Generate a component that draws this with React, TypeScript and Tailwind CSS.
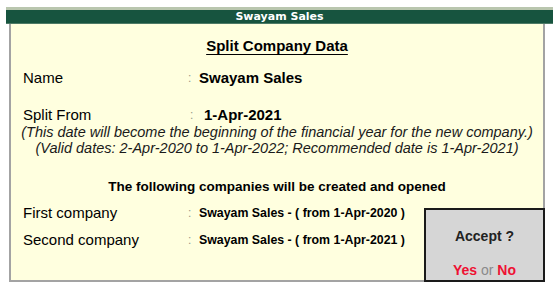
export default function App() {
  const font = "font-['Liberation_Sans',Arial,sans-serif]";
  return (
    <div className={`relative w-[553px] h-[288px] bg-white overflow-hidden ${font}`}>
      {/* faint frame line of the window behind */}
      <div className="ml-[6px] mt-[7px] h-[3px] bg-[#b9c6ae]" />
      {/* title bar */}
      <div className="ml-[6px] h-[14px] bg-[#17543f] border-b border-[#4d7a66] flex items-center justify-center">
        <span className="font-['DejaVu_Sans',Verdana,sans-serif] text-[11px] font-bold text-white leading-none">
          Swayam Sales
        </span>
      </div>
      {/* panel */}
      <div className="relative ml-[9px] w-[536px] h-[258px] bg-[#ffffdf] border-x-2 border-b-2 border-[#a3a3a3] text-black">
        <div className="pt-[10px] text-center">
          <span className="text-[15px] font-bold underline underline-offset-[3px] leading-none">Split Company Data</span>
        </div>

        <div className="mt-[11px] flex items-center pl-[12px] h-[18px]">
          <span className="w-[165px] text-[15px]">Name</span>
          <span className="w-[11px] text-[12px] text-[#9a9a8a]">:</span>
          <span className="text-[15px] font-bold">Swayam Sales</span>
        </div>

        <div className="mt-[19px] flex items-center pl-[12px] h-[18px]">
          <span className="w-[167px] text-[15px]">Split From</span>
          <span className="w-[14px] text-[12px] text-[#9a9a8a]">:</span>
          <span className="text-[15px] font-bold">1-Apr-2021</span>
        </div>
        <div className="text-center italic text-[14.5px] leading-[16px] text-[#1a1a1a]">
          <div>(This date will become the beginning of the financial year for the new company.)</div>
          <div>(Valid dates: 2-Apr-2020 to 1-Apr-2022; Recommended date is 1-Apr-2021)</div>
        </div>

        <div className="mt-[22px] text-center text-[13.5px] font-bold leading-[18px]">
          The following companies will be created and opened
        </div>

        <div className="mt-[8px] flex items-center pl-[12px] h-[18px]">
          <span className="w-[165px] text-[15px]">First company</span>
          <span className="w-[11px] text-[12px] text-[#9a9a8a]">:</span>
          <span className="inline-block origin-left scale-x-[0.95] whitespace-nowrap text-[13px] font-bold">
            Swayam Sales - ( from 1-Apr-2020 )
          </span>
        </div>
        <div className="mt-[9px] flex items-center pl-[12px] h-[18px]">
          <span className="w-[165px] text-[15px]">Second company</span>
          <span className="w-[11px] text-[12px] text-[#9a9a8a]">:</span>
          <span className="inline-block origin-left scale-x-[0.95] whitespace-nowrap text-[13px] font-bold">
            Swayam Sales - ( from 1-Apr-2021 )
          </span>
        </div>

        {/* accept prompt */}
        <div className="absolute right-[-2px] bottom-[-2px] w-[121px] h-[74px] bg-[#d6d6d6] border-2 border-[#1a1a1a] flex flex-col items-center">
          <div className="mt-[16px] text-[14px] font-bold text-[#222]">Accept ?</div>
          <div className="mt-auto mb-[-1px] text-[14px]">
            <span className="font-bold text-[#ee1133]">Yes</span>
            <span className="text-[#8a8a8a]"> or </span>
            <span className="font-bold text-[#ee1133]">No</span>
          </div>
        </div>
      </div>
    </div>
  );
}
